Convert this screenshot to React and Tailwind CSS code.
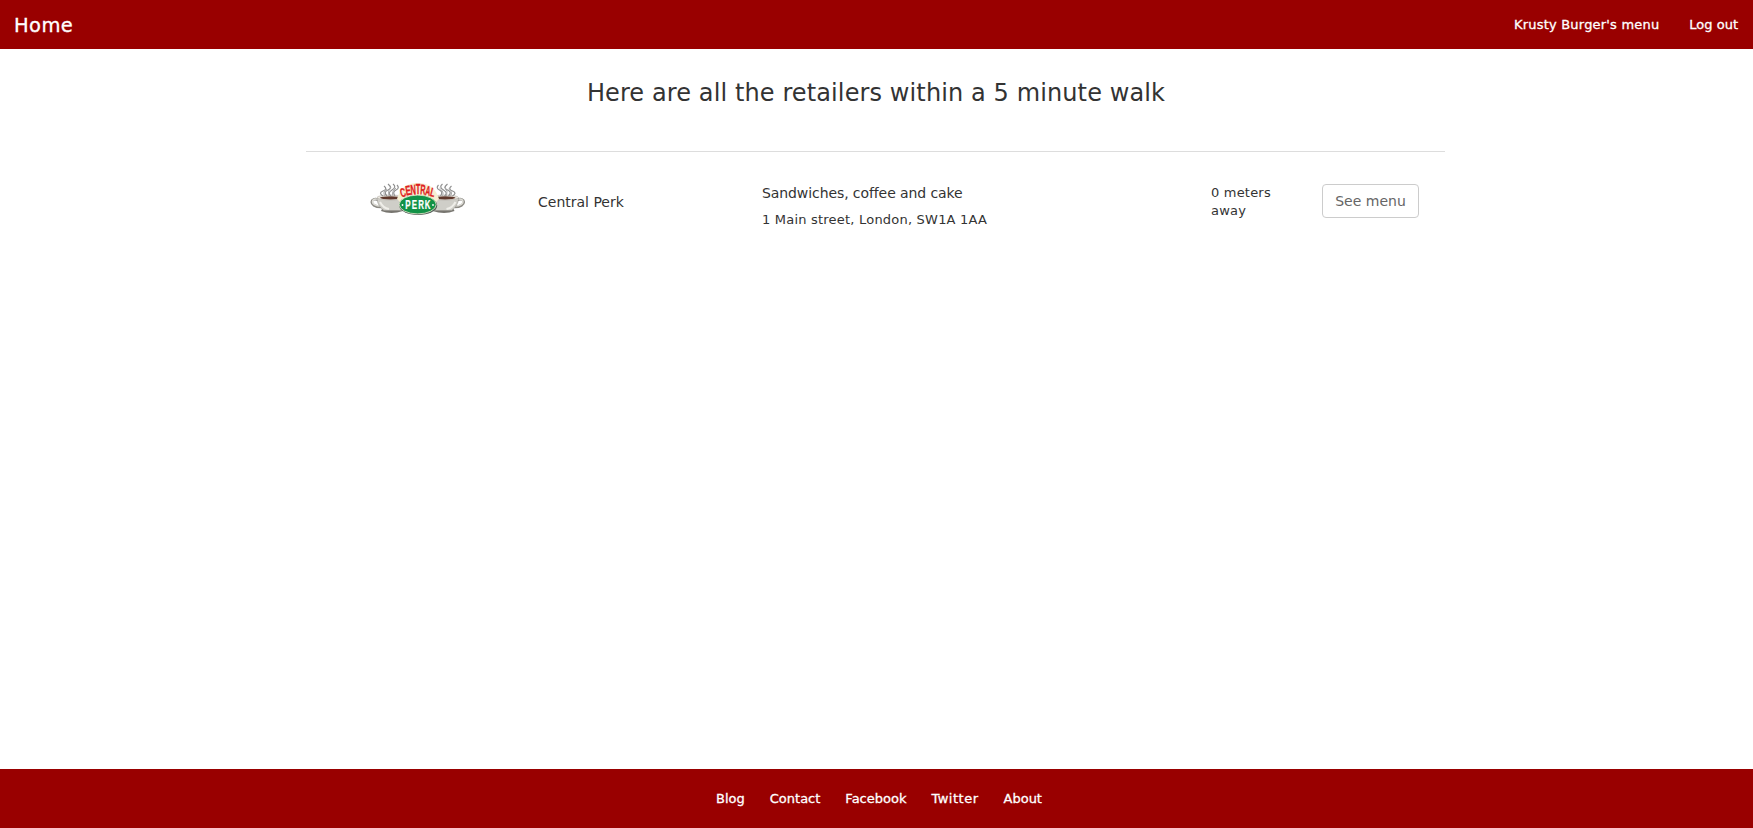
function Cup() {
  return (
    <g>
      <path d="M10 21C1 17-1 28 12 28" fill="none" stroke="#8b8983" strokeWidth="2.6" />
      <path d="M10 20.6C2 17.500 0 27 12 27" fill="none" stroke="#dddcd6" strokeWidth="1.6" />
      <path d="M12 32q10 4 22 0v-2H13z" fill="#77756f" />
      <path d="M8 19h27v12.500H15C11 29 8 24 8 19z" fill="#cfcec8" stroke="#8f8d87" strokeWidth=".5" />
      <path d="M11 23q3 6 9 7" fill="none" stroke="#efeee9" strokeWidth="2" />
      <ellipse cx="21.500" cy="18.500" rx="13.500" ry="2.500" fill="#e9e6de" stroke="#aaa59e" strokeWidth=".5" />
      <ellipse cx="21.500" cy="18.800" rx="10.500" ry="1.600" fill="#60382b" />
      <path d="M14 17q-5-3 0-5t1-5M18 17q-4-4 1-6t0-6M22 17q-4-3 1-6t1-6M26 17q-3-4 1-6t1-5" fill="none" stroke="#8e8e8e" strokeWidth="1.200" />
      <path d="M16 17q-3-4 2-7M20 17q-2-5 2-9M24 17q-2-4 3-8" fill="none" stroke="#a9a9a9" strokeWidth="1" />
    </g>
  );
}

function Logo() {
  return (
    <svg className="block h-[40px] w-[100px]" viewBox="0 0 100 40" role="img" aria-label="Central Perk">
      <Cup />
      <g transform="translate(97.500 0) scale(-1 1)"><Cup /></g>
      <path d="M28 20Q32 4 48.700 4T70 20l-6 6H34z" fill="#f6efd2" />
      <ellipse cx="49.200" cy="26.500" rx="19" ry="9.500" fill="#55605a" />
      <ellipse cx="48.700" cy="25.500" rx="18.500" ry="9.400" fill="#129247" stroke="#ece9cf" strokeWidth=".8" />
      <g transform="translate(-.8 -.8)" fill="#df2020" stroke="#df2020" strokeWidth=".3" fontFamily="Liberation Sans" fontWeight="700" textAnchor="middle">
        <text transform="translate(36 18.500) rotate(-16) scale(.6 1)" fontSize="12.500">C</text>
        <text transform="translate(40.700 17) rotate(-9) scale(.58 1)" fontSize="13.500">E</text>
        <text transform="translate(45.200 16.300) rotate(-4) scale(.54 1)" fontSize="14">N</text>
        <text transform="translate(49.800 16) scale(.54 1)" fontSize="14">T</text>
        <text transform="translate(54.300 16.300) rotate(4) scale(.52 1)" fontSize="14">R</text>
        <text transform="translate(59 17.100) rotate(9) scale(.52 1)" fontSize="13.500">A</text>
        <text transform="translate(63.500 18.300) rotate(14) scale(.6 1)" fontSize="12.500">L</text>
      </g>
      <g transform="translate(-1 0)" fill="#fff" stroke="#fff" strokeWidth=".2" fontFamily="Liberation Sans" fontWeight="700" fontSize="12" textAnchor="middle">
        <text transform="translate(40 30.200) scale(.66 1)">P</text>
        <text transform="translate(46.500 30.200) scale(.66 1)">E</text>
        <text transform="translate(53 30.200) scale(.66 1)">R</text>
        <text transform="translate(59.500 30.200) scale(.66 1)">K</text>
      </g>
      <circle cx="33.500" cy="26" r=".9" fill="#fff" />
      <circle cx="64" cy="26" r=".9" fill="#fff" />
    </svg>
  );
}

export default function App() {
  return (
    <div className="flex min-h-screen flex-col bg-white font-['Verdana','DejaVu_Sans',sans-serif] text-[14px] leading-[20px] text-[#333]">
      <header className="flex h-[49px] items-center justify-between bg-[#900] pr-[15px] pl-[14px] text-white">
        <a href="#" className="pt-[2px] text-[19.5px] tracking-[0.4px] [-webkit-text-stroke:0.3px_white]">Home</a>
        <nav className="flex gap-[30px] text-[13px] [-webkit-text-stroke:0.3px_white]">
          <a href="#" className="tracking-[0.2px]">Krusty Burger's menu</a>
          <a href="#">Log out</a>
        </nav>
      </header>
      <main className="w-full flex-1 pr-[308px] pl-[306px]">
        <h1 className="h-[102px] pt-[31px] pl-[1px] text-center text-[24px] leading-[26px] tracking-[0.11px]">Here are all the retailers within a 5 minute walk</h1>
        <section className="flex items-start border-t border-[#ddd]">
          <div className="w-[232px] pt-[27px] pl-[63px]"><Logo /></div>
          <h2 className="w-[224px] pt-[40px]">Central Perk</h2>
          <div className="w-[449px] pt-[31px]">
            <p className="tracking-[-0.09px]">Sandwiches, coffee and cake</p>
            <p className="pt-[8px] text-[13px] leading-[18px] tracking-[0.21px]">1 Main street, London, SW1A 1AA</p>
          </div>
          <p className="w-[111px] pt-[32px] text-[13px] leading-[18px] tracking-[0.2px]">0 meters<br />away</p>
          <button className="mt-[32px] h-[34px] w-[97px] rounded-[4px] border border-[#ccc] text-[14px] text-[#666]">See menu</button>
        </section>
      </main>
      <footer className="flex h-[59px] items-center justify-center gap-[25px] bg-[#900] pl-[5px] text-[13px] text-white [-webkit-text-stroke:0.3px_white]">
        <a href="#">Blog</a>
        <a href="#">Contact</a>
        <a href="#">Facebook</a>
        <a href="#" className="tracking-[0.5px]">Twitter</a>
        <a href="#">About</a>
      </footer>
    </div>
  );
}
